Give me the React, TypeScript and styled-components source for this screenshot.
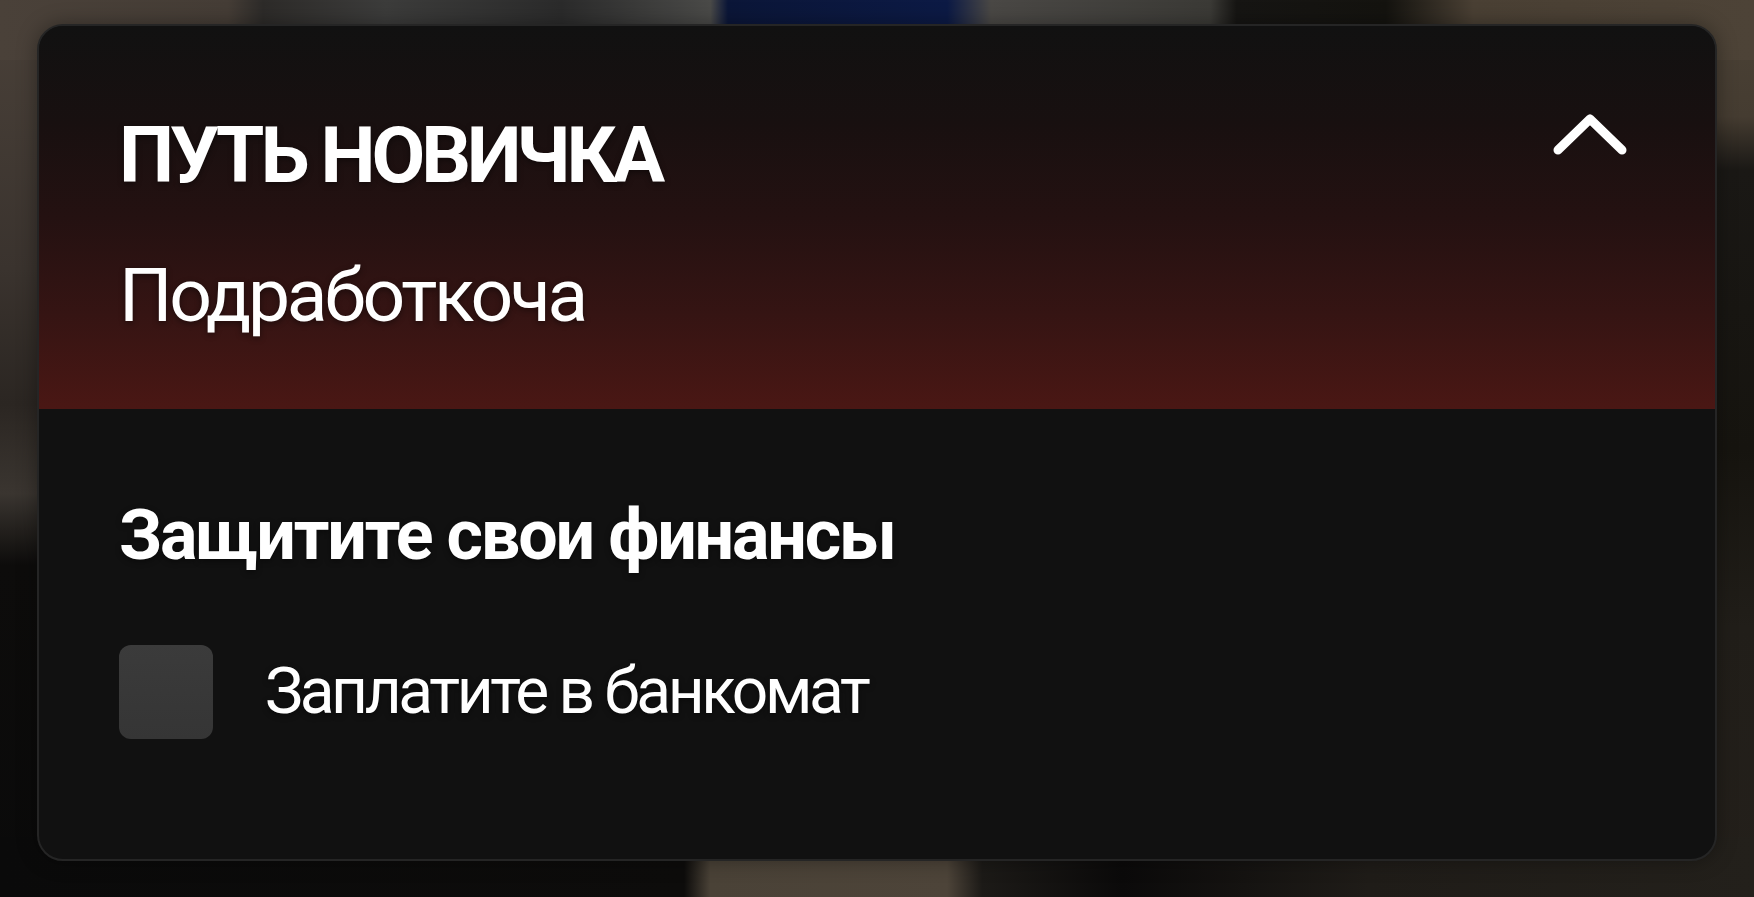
import React from "react";
import styled, { createGlobalStyle } from "styled-components";

const Global = createGlobalStyle`
  html, body { margin: 0; padding: 0; }
  body {
    width: 1754px;
    height: 897px;
    overflow: hidden;
    font-family: Roboto, "Noto Sans", sans-serif;
    background:
      linear-gradient(to right, #4a4139 0%, #453d36 13%, #2d2b29 15%, #3c3c3b 22%, #2b2b2b 32%, #4a4a48 40.5%, #0b1638 41.5%, #0c1a45 54%, #4a4845 56.5%, #3b3a36 69%, #161513 70.5%, #14130f 79%, #4a4034 84%, #4d4337 100%) top / 100% 60px no-repeat,
      linear-gradient(to right, #0a0a0a 0%, #0d0c0b 39%, #4a4237 40.5%, #4d4439 54%, #1c1a17 56%, #0b0a0a 64%, #1f1c18 78%, #23201b 100%) bottom / 100% 60px no-repeat,
      linear-gradient(to bottom, #4a4139 0%, #3a332e 30%, #2b2622 45%, #3a3530 55%, #0d0c0b 63%, #0a0a0a 100%) left / 60px 100% no-repeat,
      linear-gradient(to bottom, #4b4236 0%, #453c31 13%, #1a1815 19%, #16140f 50%, #211e19 70%, #24201b 100%) right / 60px 100% no-repeat,
      #1a1816;
  }
`;

const Stage = styled.main`
  box-sizing: border-box;
  width: 1754px;
  height: 897px;
  padding: 24px 37px 36px 37px;
  display: flex;
`;

const Card = styled.section`
  box-sizing: border-box;
  flex: 1;
  display: flex;
  flex-direction: column;
  border: 2px solid #252525;
  border-radius: 26px;
  overflow: hidden;
  background: #111111;
  color: #ffffff;
  box-shadow: 0 0 20px rgba(0, 0, 0, 0.35);
`;

const Header = styled.header`
  box-sizing: border-box;
  height: 383px;
  padding: 78px 85px 0 80px;
  display: grid;
  grid-template-columns: 1fr auto;
  grid-template-rows: auto auto;
  align-content: start;
  background: linear-gradient(
    to bottom,
    #111111 0%,
    #181010 25%,
    #241111 50%,
    #351413 75%,
    #4a1714 100%
  );
`;

const Title = styled.h1`
  margin: 2px 0 0 0;
  font-family: Roboto, "Noto Sans", sans-serif;
  font-weight: 700;
  font-size: 78px;
  line-height: 100px;
  letter-spacing: -4.1px;
  text-shadow: 0 2px 6px rgba(0, 0, 0, 0.45);
`;

const Subtitle = styled.p`
  grid-column: 1 / -1;
  margin: 44px 0 0 0;
  font-family: Roboto, "Noto Sans", sans-serif;
  font-weight: 400;
  font-size: 75px;
  line-height: 90px;
  letter-spacing: -3.3px;
  text-shadow: 0 2px 6px rgba(0, 0, 0, 0.45);
`;

const Toggle = styled.button`
  align-self: start;
  margin: 8px 0 0 0;
  padding: 0;
  width: 80px;
  height: 50px;
  border: none;
  background: transparent;
  display: flex;
  align-items: center;
  justify-content: center;
  cursor: pointer;
`;

const Body = styled.div`
  padding: 81px 84px 0 80px;
  display: flex;
  flex-direction: column;
`;

const SectionTitle = styled.h2`
  margin: 0;
  font-family: Roboto, "Noto Sans", sans-serif;
  font-weight: 700;
  font-size: 70px;
  line-height: 90px;
  letter-spacing: -2.2px;
  text-shadow: 0 2px 6px rgba(0, 0, 0, 0.45);
`;

const TaskRow = styled.label`
  margin-top: 65px;
  display: flex;
  align-items: center;
  gap: 52px;
`;

const Box = styled.span`
  box-sizing: border-box;
  width: 94px;
  height: 94px;
  border-radius: 12px;
  background: linear-gradient(to bottom, #3b3b3b, #353535);
  flex: none;
`;

const TaskText = styled.span`
  font-family: Roboto, "Noto Sans", sans-serif;
  font-weight: 400;
  font-size: 64px;
  line-height: 80px;
  letter-spacing: -3.35px;
  text-shadow: 0 2px 6px rgba(0, 0, 0, 0.45);
`;

export default function App() {
  return (
    <>
      <Global />
      <Stage>
        <Card>
          <Header>
            <Title>ПУТЬ НОВИЧКА</Title>
            <Toggle aria-label="Свернуть">
              <svg width="80" height="50" viewBox="0 0 80 50" fill="none">
                <polyline
                  points="8,38 40,7 72,38"
                  stroke="#ffffff"
                  strokeWidth="9"
                  strokeLinecap="round"
                  strokeLinejoin="round"
                />
              </svg>
            </Toggle>
            <Subtitle>Подработкоча</Subtitle>
          </Header>
          <Body>
            <SectionTitle>Защитите свои финансы</SectionTitle>
            <TaskRow>
              <Box />
              <TaskText>Заплатите в банкомат</TaskText>
            </TaskRow>
          </Body>
        </Card>
      </Stage>
    </>
  );
}
